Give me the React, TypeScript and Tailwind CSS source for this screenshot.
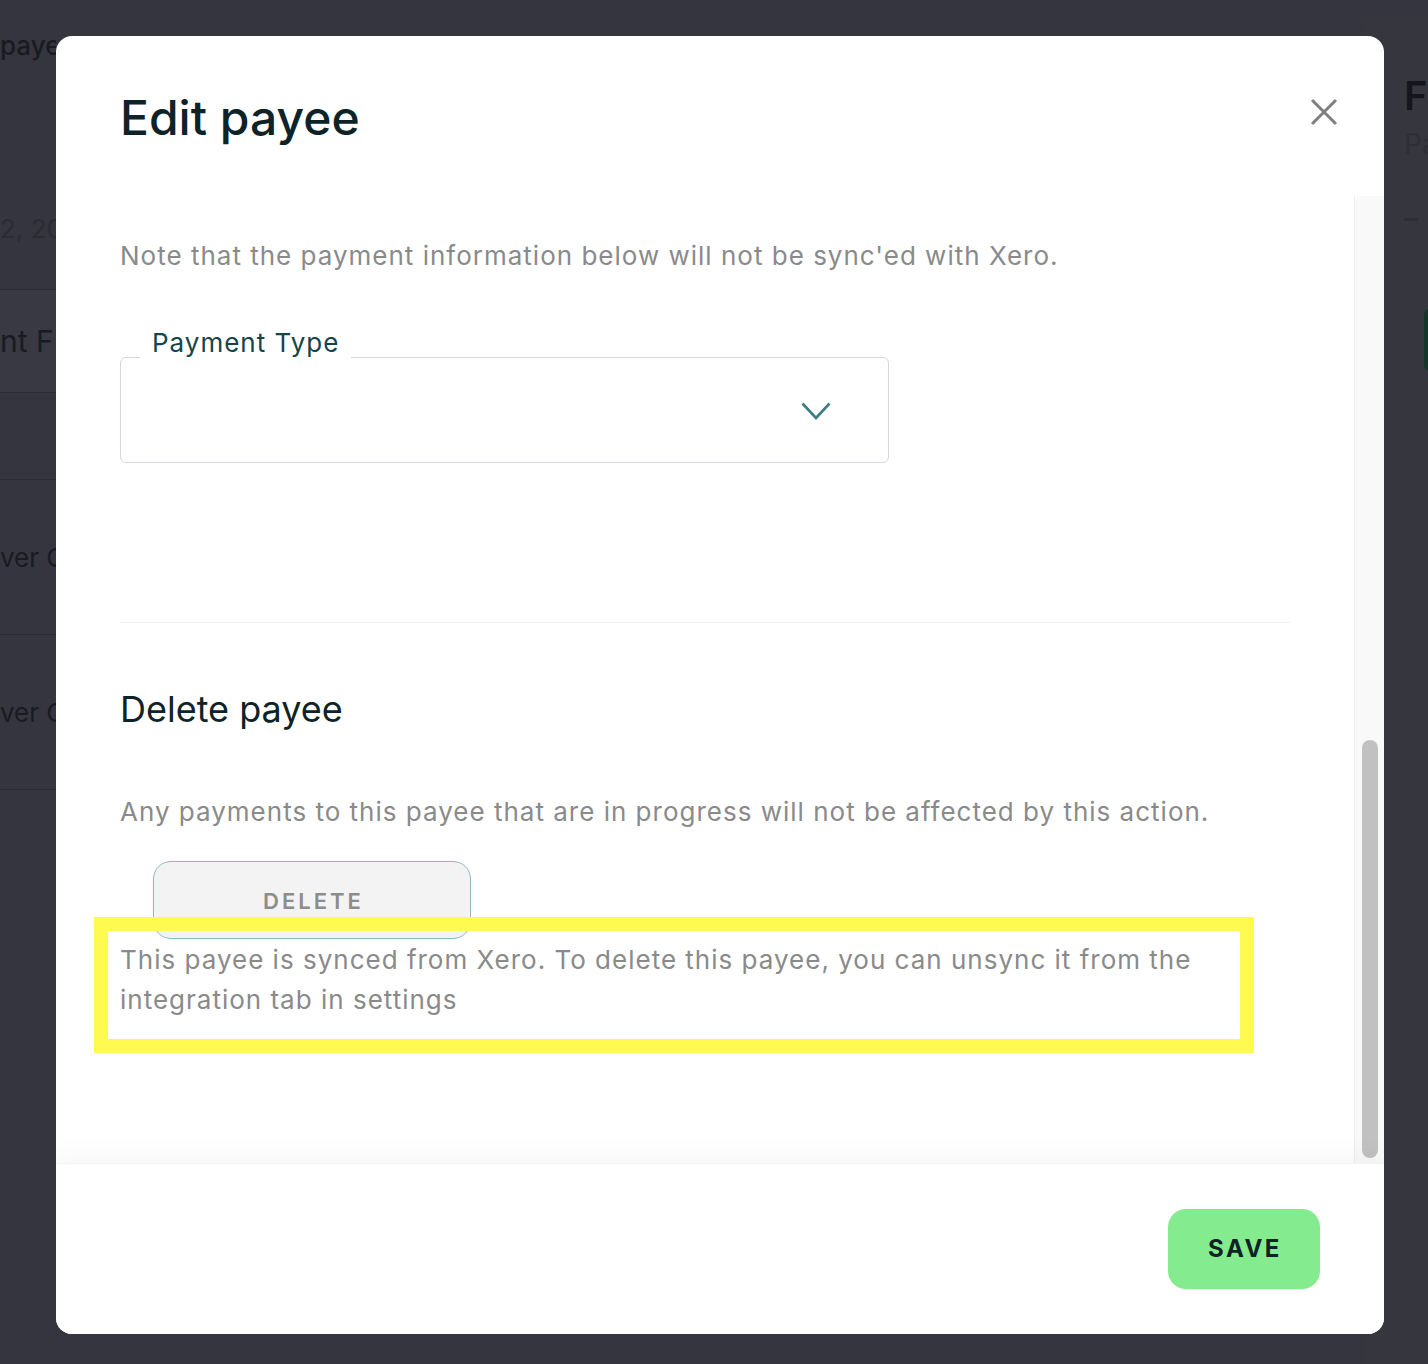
export default function App() {
  return (
    <div className="relative w-[1428px] h-[1364px] overflow-hidden bg-[#35353f] font-[Inter,sans-serif]">
      {/* dimmed background page */}
      <div className="flex h-full">
        <div className="w-[56px] overflow-hidden whitespace-nowrap flex flex-col text-[#1a1b21]">
          <div className="h-[90px] flex items-center text-[26px] font-medium">paye</div>
          <div className="h-[200px] flex items-end pb-[40px] border-b border-[#2c2d35] text-[26px] leading-[40px] text-[#2a2b33]">2, 20</div>
          <div className="h-[103px] flex items-center border-b border-[#2c2d35] text-[30px] bg-[#383943]">nt F</div>
          <div className="h-[87px] border-b border-[#2c2d35]"></div>
          <div className="h-[155px] flex items-center border-b border-[#2c2d35] text-[26px]">ver C</div>
          <div className="h-[155px] flex items-center border-b border-[#2c2d35] text-[26px]">ver C</div>
        </div>
        <div className="ml-auto w-[66px] mt-[16px] rounded-tl-[12px] bg-[#36363f] flex flex-col pl-[42px] overflow-hidden whitespace-nowrap">
          <div className="h-[50px]"></div>
          <div className="text-[40px] leading-[60px] font-semibold text-[#15161c]">F</div>
          <div className="text-[28px] leading-[36px] text-[#2d2e36]">Pa</div>
          <div className="mt-[56px] w-[14px] h-[3px] bg-[#2c2d35]"></div>
          <div className="mt-[88px] ml-[20px] w-[10px] h-[62px] rounded-l-[6px] bg-[#17342a]"></div>
        </div>
      </div>

      {/* modal */}
      <div className="absolute left-[56px] top-[36px] w-[1328px] h-[1298px] bg-white rounded-[16px] flex flex-col overflow-hidden">
        {/* header */}
        <div className="h-[160px] flex items-center justify-between pl-[64px] pr-[46px]">
          <h1 className="mt-[3px] text-[48px] leading-[58px] font-medium text-[#0d2328]">Edit payee</h1>
          <svg width="28" height="28" viewBox="0 0 28 28" className="mb-[8px]">
            <path d="M2 2 L26 26 M26 2 L2 26" stroke="#7f7f7f" strokeWidth="3" fill="none" />
          </svg>
        </div>

        {/* body */}
        <div className="flex-1 min-h-0 flex flex-row">
          <div className="flex-1 px-[64px] pt-[40px] flex flex-col">
            <p className="text-[26px] leading-[40px] tracking-[1px] text-[#8a8a8a]">
              Note that the payment information below will not be sync'ed with Xero.
            </p>

            <div className="relative mt-[81px] h-[106px] w-[769px] border border-[#d6d6de] rounded-[6px] flex items-center justify-end pr-[57px]">
              <span className="absolute left-[19px] top-[-31px] h-[32px] px-3 bg-white text-[26px] leading-[32px] tracking-[1px] text-[#15444a]">
                Payment Type
              </span>
              <svg width="30" height="18" viewBox="0 0 30 18" className="mt-[2px]">
                <polyline points="1.5,1.5 15,16 28.5,1.5" stroke="#3d7e85" strokeWidth="2.6" fill="none" />
              </svg>
            </div>

            <div className="mt-[159px] h-px bg-[#efefef]"></div>

            <h2 className="mt-[64px] text-[36px] leading-[44px] text-[#0d2328]">Delete payee</h2>

            <p className="mt-[61px] text-[26px] leading-[40px] tracking-[1px] text-[#8a8a8a]">
              Any payments to this payee that are in progress will not be affected by this action.
            </p>

            <button className="mt-[29px] ml-[33px] w-[318px] h-[78px] rounded-[18px] border border-[#8fb9bf] bg-[#f3f3f3] text-[22px] font-semibold tracking-[3px] pl-[3px] pt-[2px] text-[#8c8c8c]">
              DELETE
            </button>

            <div className="relative mt-px">
              <p className="text-[26px] leading-[40px] tracking-[1px] text-[#8a8a8a]">
                This payee is synced from Xero. To delete this payee, you can unsync it from the integration tab in settings
              </p>
              <div className="absolute left-[-26px] top-[-23px] w-[1160px] h-[136px] border-[14px] border-[#fefa50] pointer-events-none"></div>
            </div>
          </div>

          {/* scrollbar */}
          <div className="w-[30px] bg-[#f9f9f9] border-l border-[#ececec] flex flex-col justify-end pb-[5px] pl-[7px]">
            <div className="w-[16px] h-[418px] rounded-full bg-[#c1c1c1]"></div>
          </div>
        </div>

        {/* footer */}
        <div className="relative z-10 h-[171px] flex items-center justify-end pr-[64px] bg-white shadow-[0_-10px_24px_rgba(0,0,0,0.035)] border-t border-[#f3f3f3]">
          <button className="w-[152px] h-[80px] rounded-[18px] bg-[#84ec8e] text-[24px] font-bold tracking-[2.5px] pl-[2px] text-[#0f2327]">
            SAVE
          </button>
        </div>
      </div>
    </div>
  );
}
